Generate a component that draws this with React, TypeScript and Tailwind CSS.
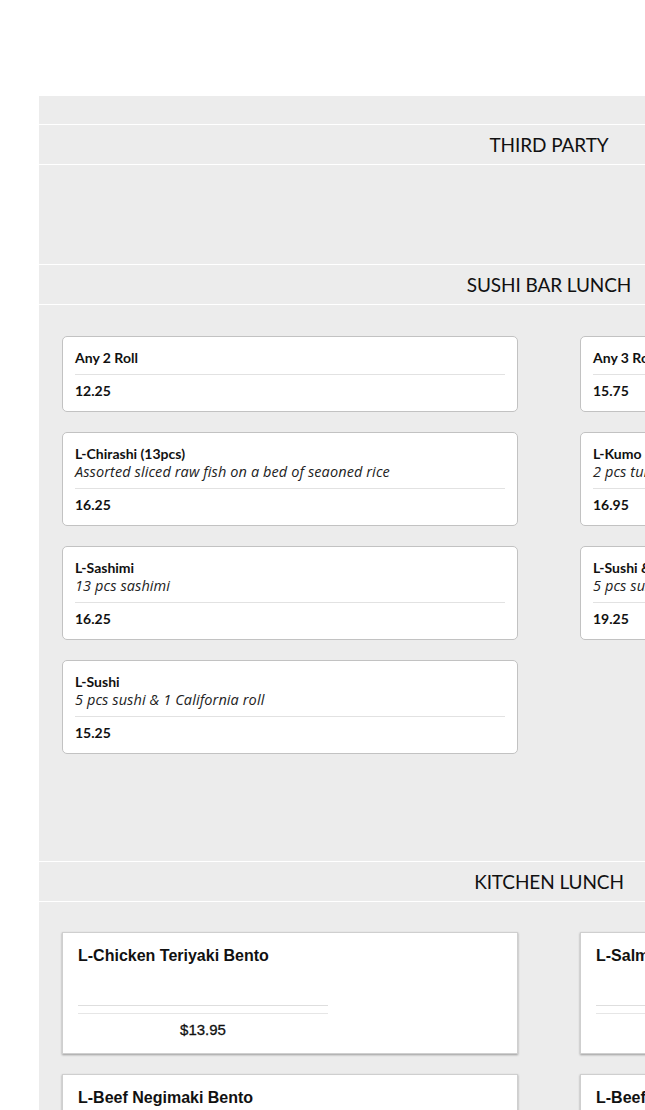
type SushiItem = { name: string; desc?: string; price: string };
type KitchenItem = { name: string; price: string };

const sushiItems: SushiItem[] = [
  { name: 'Any 2 Roll', price: '12.25' },
  { name: 'Any 3 Roll', price: '15.75' },
  { name: 'L-Chirashi (13pcs)', desc: 'Assorted sliced raw fish on a bed of seaoned rice', price: '16.25' },
  { name: 'L-Kumo Special', desc: '2 pcs tuna, 2 pcs salmon & 1 spicy tuna roll', price: '16.95' },
  { name: 'L-Sashimi', desc: '13 pcs sashimi', price: '16.25' },
  { name: 'L-Sushi & Sashimi', desc: '5 pcs sushi, 8 pcs sashimi & 1 California roll', price: '19.25' },
  { name: 'L-Sushi', desc: '5 pcs sushi & 1 California roll', price: '15.25' },
];

const kitchenItems: KitchenItem[] = [
  { name: 'L-Chicken Teriyaki Bento', price: '$13.95' },
  { name: 'L-Salmon Teriyaki Bento', price: '$15.95' },
  { name: 'L-Beef Negimaki Bento', price: '$14.95' },
  { name: 'L-Beef Teriyaki Bento', price: '$14.95' },
];

function SectionHeader({ title }: { title: string }) {
  return (
    <div className="h-[41px] border-y border-white flex items-center justify-center">
      <h2 className="text-[19px] leading-none text-[#111] tracking-[-0.1px]">{title}</h2>
    </div>
  );
}

function SushiCard({ item }: { item: SushiItem }) {
  return (
    <div className="bg-white border border-[#c2c2c2] rounded-[5px] pt-[12px] pb-[10px] px-[12px]">
      <div className="text-[14px] leading-[18px] font-bold text-[#111] whitespace-nowrap">{item.name}</div>
      {item.desc && (
        <div className="font-['Open_Sans',sans-serif] text-[14.5px] leading-[18px] italic text-[#222] whitespace-nowrap tracking-[0.1px]">
          {item.desc}
        </div>
      )}
      <div className="mt-[7px] border-t border-[#e2e2e2]" />
      <div className="mt-[6px] text-[14px] leading-[20px] font-bold text-[#111]">{item.price}</div>
    </div>
  );
}

function KitchenCard({ item }: { item: KitchenItem }) {
  return (
    <div className="bg-white border border-[#cfcfcf] shadow-[0_1px_2px_rgba(0,0,0,0.35)] pt-[13px] pb-[13px] px-[15px] font-['Liberation_Sans',Arial,sans-serif]">
      <div className="text-[16px] leading-[20px] font-bold text-[#111] whitespace-nowrap">{item.name}</div>
      <div className="mt-[39px] w-[250px]">
        <div className="border-t border-[#dedede] h-[8px]" />
        <div className="border-t border-[#e6e6e6]" />
        <div className="mt-[6px] text-center text-[15px] leading-[20px] text-[#111] [-webkit-text-stroke:0.3px_#111]">
          {item.price}
        </div>
      </div>
    </div>
  );
}

export default function App() {
  return (
    <div className="min-h-screen bg-white overflow-hidden font-['Lato','Open_Sans',sans-serif]">
      <div className="pt-[96px] pl-[39px]">
        <div className="w-[1020px] bg-[#ececec]">
          <div className="h-[28px]" />
          <SectionHeader title="THIRD PARTY" />
          <div className="h-[99px]" />

          <SectionHeader title="SUSHI BAR LUNCH" />
          <div className="grid grid-cols-2 items-start gap-x-[62px] gap-y-[20px] px-[23px] pt-[31px] pb-[107px]">
            {sushiItems.map((item) => (
              <SushiCard key={item.name} item={item} />
            ))}
          </div>

          <SectionHeader title="KITCHEN LUNCH" />
          <div className="grid grid-cols-2 items-start gap-x-[62px] gap-y-[20px] px-[23px] pt-[30px] pb-[40px]">
            {kitchenItems.map((item) => (
              <KitchenCard key={item.name} item={item} />
            ))}
          </div>
        </div>
      </div>
    </div>
  );
}
